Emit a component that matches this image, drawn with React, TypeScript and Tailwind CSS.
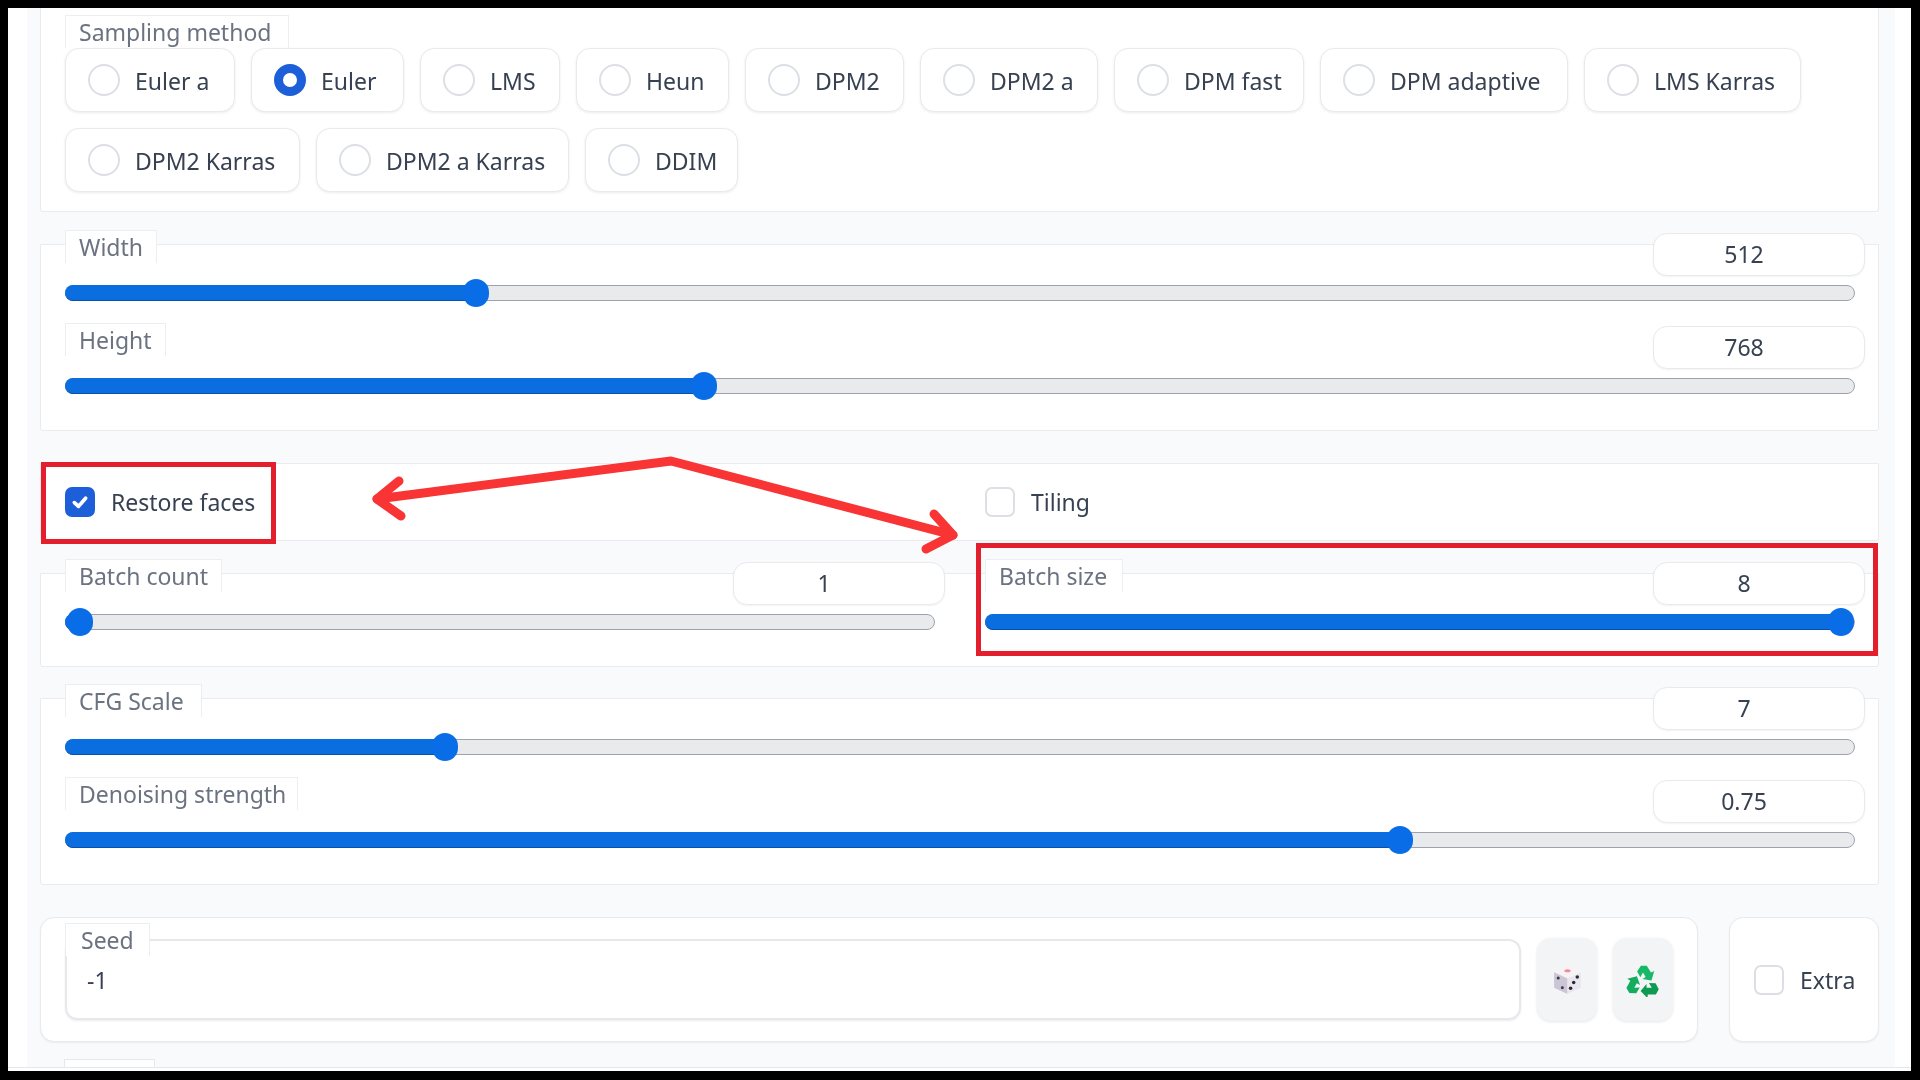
import React from "react";

type R = { t: string; w: string; on?: boolean };
const row1: R[] = [
  { t: "Euler a", w: "w-[170px]" },
  { t: "Euler", w: "w-[153px]", on: true },
  { t: "LMS", w: "w-[140px]" },
  { t: "Heun", w: "w-[153px]" },
  { t: "DPM2", w: "w-[159px]" },
  { t: "DPM2 a", w: "w-[178px]" },
  { t: "DPM fast", w: "w-[190px]" },
  { t: "DPM adaptive", w: "w-[248px]" },
  { t: "LMS Karras", w: "w-[217px]" },
];
const row2: R[] = [
  { t: "DPM2 Karras", w: "w-[235px]" },
  { t: "DPM2 a Karras", w: "w-[253px]" },
  { t: "DDIM", w: "w-[153px]" },
];

function Radio({ t, w, on }: R) {
  return (
    <div className={`${w} h-[64px] flex items-center gap-[15px] pl-[22px] bg-white rounded-[14px] border border-[#e8eaee] shadow-[0_1px_3px_rgba(0,0,0,0.08)]`}>
      <span className={`w-[32px] h-[32px] rounded-full shrink-0 bg-white ${on ? "border-[9px] border-[#1d5fd8]" : "border-2 border-[#dcdfe4]"}`} />
      <span className="pt-[2px] text-[#374151] whitespace-nowrap">{t}</span>
    </div>
  );
}

function Label({ t, w }: { t: string; w: string }) {
  return (
    <div className={`${w} h-[33px] bg-white border-t border-x border-[#eceef1] flex items-center pl-[13px] text-[#6b7280] whitespace-nowrap`}>
      {t}
    </div>
  );
}

function Slider({ label, lw, value, at }: { label: string; lw: string; value: string; at: number }) {
  return (
    <div className="h-[93px]">
      <div className="flex justify-between items-start h-[55px]">
        <Label t={label} w={lw} />
        <div className="mt-[3px] w-[212px] h-[43px] rounded-[14px] bg-white border border-[#e8eaee] shadow-[0_1px_2px_rgba(0,0,0,0.05)] flex items-center justify-center pr-[30px] text-[#374151]">
          {value}
        </div>
      </div>
      <div className="relative mr-[10px] h-[16px] rounded-full bg-[#e9eaec] border border-[#9ca3af]">
        <div className="absolute -left-px -top-px -bottom-px rounded-full bg-[#0a6de0] border-b border-[#0a4fa8]" style={{ width: at }} />
        <div className="absolute -top-[7px] w-[26px] h-[28px] rounded-full bg-[#0a6de8]" style={{ left: at - 14 }} />
      </div>
    </div>
  );
}

function Check({ on }: { on?: boolean }) {
  return (
    <span className={`w-[30px] h-[30px] rounded-[7px] shrink-0 flex items-center justify-center ${on ? "bg-[#1d5fd8]" : "bg-white border-2 border-[#dcdfe4]"}`}>
      {on && (
        <svg viewBox="0 0 16 16" className="w-[20px] h-[20px]" fill="none" stroke="#fff" strokeWidth="3" strokeLinecap="round" strokeLinejoin="round">
          <path d="M3.5 8.5 L6.8 11.5 L12.5 5" />
        </svg>
      )}
    </span>
  );
}

function Dice() {
  return (
    <svg viewBox="0 0 32 32" className="w-[33px] h-[33px]">
      <path d="M16 3 L29 9 L16 15 L3 9 Z" fill="#f7f2f5" />
      <path d="M3 9 L16 15 L16 30 L3 24 Z" fill="#cbc5d6" />
      <path d="M29 9 L16 15 L16 30 L29 24 Z" fill="#eae6ef" />
      <ellipse cx="16" cy="7.5" rx="3" ry="1.5" fill="#f08a96" />
      <circle cx="7" cy="14.5" r="1.5" fill="#3b3744" />
      <circle cx="11" cy="24" r="1.4" fill="#3b3744" />
      <circle cx="25.5" cy="13.5" r="1.7" fill="#2c2a36" />
      <circle cx="22" cy="19" r="1.7" fill="#2c2a36" />
      <circle cx="19" cy="24.5" r="1.7" fill="#2c2a36" />
    </svg>
  );
}

function Recycle() {
  const arm = "M10.5 8 L14 2.5 H19.5 L23.5 9 L26.5 7.5 L24 16.5 L15.5 15 L18.5 13.2 L16 9 L13.5 13.5 Z";
  return (
    <svg viewBox="0 0 32 32" className="w-[34px] h-[34px]">
      <path d={arm} fill="#17b866" />
      <path d={arm} fill="#0f9a52" transform="rotate(120 16 18.5)" />
      <path d={arm} fill="#14ad5e" transform="rotate(240 16 18.5)" />
    </svg>
  );
}

const panel = "bg-white border-b border-x border-[#e9ebef] rounded-b-[3px]";

export default function App() {
  return (
    <div className="relative w-[1920px] h-[1080px] bg-black overflow-hidden pl-[8px] pr-[9px] pt-[8px] pb-[9px] font-['Noto_Sans',sans-serif] text-[23px] leading-none blur-[0.4px]">
      <div className="h-full bg-white pl-[19px] pr-[16px]">
        <div className="h-full bg-[#f9fafb] pl-[13px] pr-[16px] overflow-hidden">
          <div className={`${panel} h-[204px] pl-[24px] pt-[7px]`}>
            <Label t="Sampling method" w="w-[224px]" />
            <div className="flex gap-[16px]">{row1.map((r) => <Radio key={r.t} {...r} />)}</div>
            <div className="flex gap-[16px] mt-[16px]">{row2.map((r) => <Radio key={r.t} {...r} />)}</div>
          </div>

          <div className={`${panel} mt-[32px] h-[187px] pl-[24px] pr-[13px] border-t`}>
            <div className="-mt-[15px]">
              <Slider label="Width" lw="w-[92px]" value="512" at={411} />
              <Slider label="Height" lw="w-[101px]" value="768" at={639} />
            </div>
          </div>

          <div className={`${panel} mt-[32px] h-[78px] pl-[24px] border-t flex items-center`}>
            <div className="w-[920px] flex items-center gap-[16px] text-[#374151]"><Check on />Restore faces</div>
            <div className="flex items-center gap-[16px] text-[#374151]"><Check />Tiling</div>
          </div>

          <div className={`${panel} mt-[32px] h-[94px] pl-[24px] pr-[13px] border-t grid grid-cols-2 gap-[40px]`}>
            <div className="-mt-[15px]">
              <Slider label="Batch count" lw="w-[157px]" value="1" at={15} />
            </div>
            <div className="-mt-[15px]">
              <Slider label="Batch size" lw="w-[138px]" value="8" at={856} />
            </div>
          </div>

          <div className={`${panel} mt-[31px] h-[187px] pl-[24px] pr-[13px] border-t`}>
            <div className="-mt-[15px]">
              <Slider label="CFG Scale" lw="w-[137px]" value="7" at={380} />
              <Slider label="Denoising strength" lw="w-[233px]" value="0.75" at={1335} />
            </div>
          </div>

          <div className="mt-[32px] flex gap-[31px] h-[125px]">
            <div className="w-[1659px] h-full bg-white rounded-[14px] border border-[#e8eaee] shadow-[0_1px_2px_rgba(0,0,0,0.06)] flex items-center gap-[16px] pl-[24px]">
              <div className="relative w-[1456px] h-[81px] rounded-[12px] border-2 border-[#e6e8eb] shadow-[0_1px_2px_rgba(0,0,0,0.08)] flex items-center pl-[20px] pt-[2px] text-[#374151]">
                -1
                <div className="absolute -left-[2px] -top-[18px] w-[85px] h-[33px] bg-white border-t border-x border-[#eceef1] flex items-center pl-[15px] text-[#6b7280]">Seed</div>
              </div>
              <div className="w-[60px] h-[83px] rounded-[14px] bg-[#f3f4f6] shadow-[0_1px_3px_rgba(0,0,0,0.1)] flex items-center justify-center"><Dice /></div>
              <div className="w-[60px] h-[83px] rounded-[14px] bg-[#f3f4f6] shadow-[0_1px_3px_rgba(0,0,0,0.1)] flex items-center justify-center"><Recycle /></div>
            </div>
            <div className="w-[150px] h-full bg-white rounded-[14px] border border-[#e8eaee] shadow-[0_1px_2px_rgba(0,0,0,0.06)] flex items-center pl-[24px] gap-[16px] text-[#374151]"><Check /><span className="pt-[2px]">Extra</span></div>
          </div>
          <div className="mt-[17px] ml-[24px] w-[91px] h-[12px] bg-white border border-[#e5e7eb]" />
        </div>
      </div>

      <div className="absolute left-[8px] right-[9px] top-[1067px] h-[4px] bg-white border-t border-[#e5e7eb]" />
      <div className="absolute left-[41px] top-[462px] w-[235px] h-[82px] border-[5px] border-[#e31e2d]" />
      <div className="absolute left-[976px] top-[543px] w-[902px] h-[113px] border-[5px] border-[#e31e2d]" />
      <svg className="absolute left-0 top-0 w-[1920px] h-[1080px] pointer-events-none" viewBox="0 0 1920 1080" fill="none" stroke="#f83434" strokeWidth="9" strokeLinecap="round" strokeLinejoin="round">
        <path d="M377 499 L671 461 L953 535" />
        <path d="M399 481 L377 499 L401 516" />
        <path d="M934 514 L953 535 L926 549" />
      </svg>
    </div>
  );
}
